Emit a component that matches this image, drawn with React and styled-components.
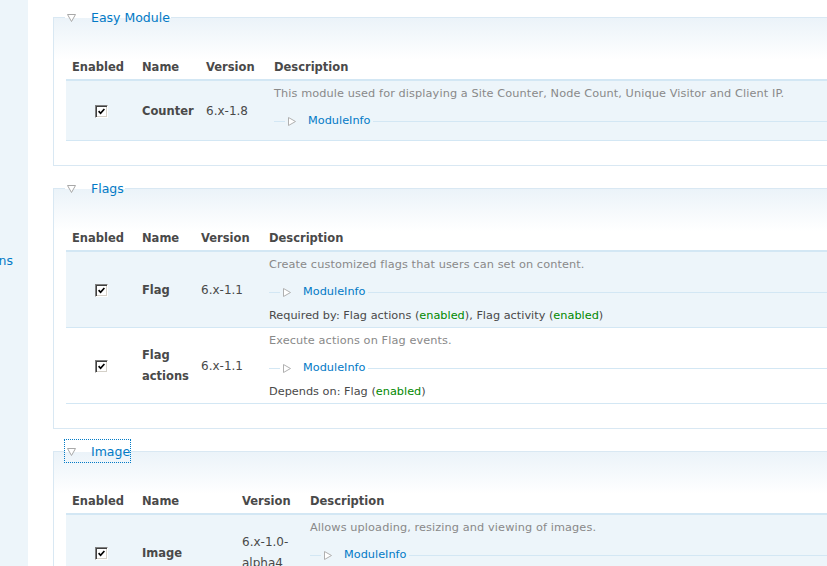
import React from "react";
import styled, { createGlobalStyle } from "styled-components";

const GlobalStyle = createGlobalStyle`
  html, body {
    margin: 0;
    padding: 0;
    background: #ffffff;
  }
  body {
    font-family: "DejaVu Sans", Verdana, sans-serif;
    font-size: 12px;
    color: #494949;
    overflow: hidden;
  }
`;

const Page = styled.div`
  display: flex;
  width: 827px;
  height: 566px;
  overflow: hidden;
`;

const Sidebar = styled.div`
  flex: none;
  width: 28px;
  background: #edf5fa;
  display: flex;
  justify-content: flex-end;
  overflow: hidden;
  padding-top: 251px;
  box-sizing: border-box;
`;

const SideLink = styled.a`
  white-space: nowrap;
  color: #027ac6;
  font-size: 12.5px;
  line-height: 20px;
  height: 20px;
  padding-right: 15px;
  text-decoration: none;
`;

const Main = styled.div`
  flex: none;
  width: 1000px;
  padding: 6px 0 0 25px;
  box-sizing: border-box;
`;

const Fieldset = styled.fieldset`
  margin: 0 0 11px;
  padding: 0 12px;
  border: 1px solid #d9e8f3;
  background: linear-gradient(to bottom, #ebf3f9 0px, #ffffff 42px);
`;

const Legend = styled.legend`
  display: flex;
  padding: 0 1px 0 0;
  margin-left: -1px;
`;

const LegendLink = styled.a`
  display: flex;
  align-items: center;
  box-sizing: border-box;
  height: 22px;
  padding-top: 2px;
  line-height: 20px;
  color: #027ac6;
  font-size: 12.5px;
  text-decoration: none;
  outline: ${(p) => (p.$focused ? "1px dotted #027ac6" : "none")};
`;

const Arrow = styled.svg`
  flex: none;
  margin-left: 2px;
  margin-right: 15px;
`;

const Table = styled.table`
  width: 100%;
  table-layout: fixed;
  border-collapse: collapse;
  margin: 25px 0 24px;
`;

const Col = styled.col`
  width: ${(p) => (p.$w ? `${p.$w}px` : "auto")};
`;

const Th = styled.th`
  text-align: left;
  font-size: 11.5px;
  font-weight: bold;
  line-height: 16px;
  padding: 6px 6px 4px;
  color: #494949;
  border-bottom: 2px solid #d3e7f4;
  white-space: nowrap;
`;

const Row = styled.tr`
  background: ${(p) => (p.$odd ? "#edf5fa" : "#ffffff")};
  border-bottom: 1px solid #d3e7f4;
`;

const CheckCell = styled.td`
  text-align: center;
  vertical-align: middle;
  padding: 0 6px;
`;

const NameCell = styled.td`
  vertical-align: middle;
  padding: 1px 6px 0;
  font-size: 11.5px;
  font-weight: bold;
  line-height: 21px;
  color: #494949;
`;

const VersionCell = styled.td`
  vertical-align: middle;
  padding: 1px 6px 0;
  font-size: 12px;
  line-height: 21px;
  color: #494949;
`;

const DescCell = styled.td`
  vertical-align: top;
  padding: 6px 6px 3px;
  font-size: 11.3px;
  line-height: 14px;
`;

const DescText = styled.div`
  height: 14px;
  line-height: 14px;
  color: #898989;
  white-space: nowrap;
  letter-spacing: 0.1px;
`;

const Box = styled.span`
  display: inline-flex;
  align-items: center;
  justify-content: center;
  width: 13px;
  height: 13px;
  box-sizing: border-box;
  background: #ffffff;
  border: 1px solid;
  border-color: #808080 #ffffff #ffffff #808080;
  box-shadow: inset 1px 1px 0 #404040, inset -1px -1px 0 #d4d0c8;
  vertical-align: middle;
`;

const InfoSet = styled.fieldset`
  display: block;
  margin: 13px 0 9px;
  padding: 0 0 0 11px;
  border: 0;
  border-top: 1px solid #d3e7f4;
  min-width: 0;
`;

const InfoLegend = styled.legend`
  display: flex;
  padding: 0 3px 0 0;
  height: 14px;
`;

const InfoLink = styled.a`
  display: flex;
  align-items: center;
  height: 14px;
  line-height: 14px;
  font-size: 11.3px;
  color: #027ac6;
  text-decoration: none;
`;

const InfoArrow = styled.svg`
  flex: none;
  margin-left: 3px;
  margin-right: 12px;
`;

const Deps = styled.div`
  height: 14px;
  padding: 1px 0 1px;
  line-height: 14px;
  color: #494949;
  white-space: nowrap;
`;

const Enabled = styled.span`
  color: #008800;
`;

const DownArrow = () => (
  <Arrow width="9" height="8" viewBox="0 0 9 8">
    <polygon points="0.5,0.5 8.5,0.5 4.5,7.5" fill="#ffffff" stroke="#a8a8a8" strokeWidth="1" />
  </Arrow>
);

const RightArrow = () => (
  <InfoArrow width="8" height="9" viewBox="0 0 8 9">
    <polygon points="0.5,0.5 7.5,4.5 0.5,8.5" fill="#ffffff" stroke="#b0b0b0" strokeWidth="1" />
  </InfoArrow>
);

const Checkbox = () => (
  <Box>
    <svg width="7" height="7" viewBox="0 0 7 7">
      <path d="M0.6 3.2 L2.6 5.3 L6.4 1" fill="none" stroke="#000" strokeWidth="1.7" />
    </svg>
  </Box>
);

const DepList = ({ label, items }) => (
  <Deps>
    {label}:{" "}
    {items.map((it, i) => (
      <React.Fragment key={it}>
        {it} (<Enabled>enabled</Enabled>){i < items.length - 1 ? ", " : ""}
      </React.Fragment>
    ))}
  </Deps>
);

const sections = [
  {
    title: "Easy Module",
    cols: [70, 64, 68],
    rows: [
      {
        name: "Counter",
        version: "6.x-1.8",
        desc: "This module used for displaying a Site Counter, Node Count, Unique Visitor and Client IP.",
      },
    ],
  },
  {
    title: "Flags",
    cols: [70, 59, 68],
    rows: [
      {
        name: "Flag",
        version: "6.x-1.1",
        desc: "Create customized flags that users can set on content.",
        required: ["Flag actions", "Flag activity"],
      },
      {
        name: "Flag actions",
        version: "6.x-1.1",
        desc: "Execute actions on Flag events.",
        depends: ["Flag"],
      },
    ],
  },
  {
    title: "Image",
    focused: true,
    cols: [70, 100, 68],
    rows: [
      {
        name: "Image",
        version: "6.x-1.0-alpha4",
        desc: "Allows uploading, resizing and viewing of images.",
        required: ["Image Attach", "Image Gallery"],
      },
    ],
  },
];

const App = () => {
  return (
    <>
      <GlobalStyle />
      <Page>
        <Sidebar>
          <SideLink href="#">Permissions</SideLink>
        </Sidebar>
        <Main>
          {sections.map((s) => (
            <Fieldset key={s.title}>
              <Legend>
                <LegendLink href="#" $focused={s.focused}>
                  <DownArrow />
                  {s.title}
                </LegendLink>
              </Legend>
              <Table>
                <colgroup>
                  <Col $w={s.cols[0]} />
                  <Col $w={s.cols[1]} />
                  <Col $w={s.cols[2]} />
                  <Col />
                </colgroup>
                <thead>
                  <tr>
                    <Th>Enabled</Th>
                    <Th>Name</Th>
                    <Th>Version</Th>
                    <Th>Description</Th>
                  </tr>
                </thead>
                <tbody>
                  {s.rows.map((r, i) => (
                    <Row key={r.name} $odd={i % 2 === 0}>
                      <CheckCell>
                        <Checkbox />
                      </CheckCell>
                      <NameCell>{r.name}</NameCell>
                      <VersionCell>{r.version}</VersionCell>
                      <DescCell>
                        <DescText>{r.desc}</DescText>
                        <InfoSet>
                          <InfoLegend>
                            <InfoLink href="#">
                              <RightArrow />
                              ModuleInfo
                            </InfoLink>
                          </InfoLegend>
                        </InfoSet>
                        {r.required && <DepList label="Required by" items={r.required} />}
                        {r.depends && <DepList label="Depends on" items={r.depends} />}
                      </DescCell>
                    </Row>
                  ))}
                </tbody>
              </Table>
            </Fieldset>
          ))}
        </Main>
      </Page>
    </>
  );
};

export default App;
